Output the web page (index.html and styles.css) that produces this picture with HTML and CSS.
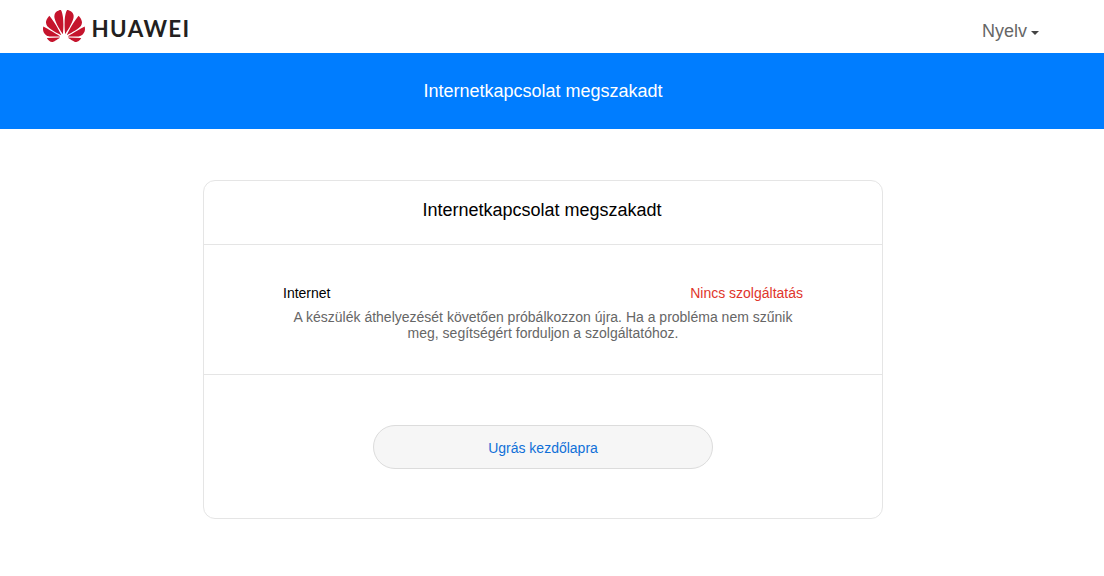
FILE: index.html
```
<!DOCTYPE html>
<html lang="hu">
<head>
  <meta charset="UTF-8">
  <title>Internetkapcsolat megszakadt</title>
  <link rel="stylesheet" href="styles.css">
</head>
<body>
  <header class="header">
    <div class="logo">
      <svg class="logo-mark" viewBox="0 2.96 24 18.08" preserveAspectRatio="none" aria-hidden="true">
        <path d="M3.67 6.14S1.82 7.91 1.72 9.78v.35c.08 1.51 1.22 2.4 1.22 2.4 1.83 1.79 6.26 4.04 7.3 4.55 0 0 .06.03.1-.01l.02-.04v-.04C7.52 10.8 3.67 6.14 3.67 6.14zM9.65 18.6c-.02-.08-.1-.08-.1-.08l-7.38.26c.8 1.43 2.15 2.53 3.56 2.2.96-.25 3.16-1.78 3.88-2.3.06-.05.04-.09.04-.09zm.08-.78C6.49 15.63.21 12.28.21 12.28c-.15.46-.2.9-.21 1.3v.07c0 1.07.4 1.82.4 1.82.8 1.69 2.34 2.2 2.34 2.2.7.3 1.4.31 1.4.31.12.02 4.4 0 5.54 0 .05 0 .08-.05.08-.05v-.06c0-.03-.03-.05-.03-.05zM9.06 3.19a3.42 3.42 0 00-2.57 3.15v.41c.03.6.16 1.05.16 1.05.66 2.9 3.86 7.65 4.55 8.65.05.05.1.03.1.03a.1.1 0 00.06-.1c1.06-10.6-1.11-13.42-1.11-13.42-.32.02-1.19.23-1.19.23zm8.299 2.27s-.49-1.8-2.44-2.28c0 0-.57-.14-1.17-.22 0 0-2.18 2.81-1.12 13.43.01.07.06.08.06.08.07.03.1-.03.1-.03.72-1.03 3.9-5.76 4.55-8.64 0 0 .36-1.4.02-2.34zm-2.92 13.07s-.07 0-.09.05c0 0-.01.07.03.1.7.51 2.85 2 3.88 2.3 0 0 .16.05.43.06h.14c.69-.02 1.9-.37 3-2.26l-7.4-.25zm7.83-8.41c.14-2.06-1.94-3.97-1.94-3.98 0 0-3.85 4.66-6.67 10.8 0 0-.03.08.02.13l.04.01h.06c1.06-.53 5.46-2.77 7.28-4.54 0 0 1.15-.93 1.21-2.42zm1.52 2.14s-6.28 3.37-9.52 5.55c0 0-.05.04-.03.11 0 0 .03.06.07.06 1.16 0 5.56 0 5.67-.02 0 0 .57-.02 1.27-.29 0 0 1.56-.5 2.37-2.27 0 0 .73-1.45.17-3.14z"/>
      </svg>
      <svg class="logo-text" viewBox="0 0 100 32">
        <text x="0.5" y="27" textLength="99" lengthAdjust="spacingAndGlyphs">HUAWEI</text>
      </svg>
    </div>
    <div class="language">Nyelv<span class="caret"></span></div>
  </header>

  <div class="banner">Internetkapcsolat megszakadt</div>

  <main class="content">
    <div class="card">
      <div class="card-title">Internetkapcsolat megszakadt</div>
      <div class="card-body">
        <div class="status">
          <span>Internet</span>
          <span class="status-value">Nincs szolgáltatás</span>
        </div>
        <p class="hint">A készülék áthelyezését követően próbálkozzon újra. Ha a probléma nem szűnik meg, segítségért forduljon a szolgáltatóhoz.</p>
      </div>
      <div class="card-footer">
        <button class="btn">Ugrás kezdőlapra</button>
      </div>
    </div>
  </main>
</body>
</html>
```
FILE: styles.css
```
* {
  box-sizing: border-box;
}

body {
  margin: 0;
  background: #fff;
  color: #000;
  font-family: "Liberation Sans", Arial, sans-serif;
  font-size: 14px;
}

.header {
  display: flex;
  justify-content: space-between;
  height: 53px;
  padding: 10px 65px 0 43px;
}

.logo {
  display: flex;
  align-items: flex-start;
  gap: 6px;
}

.logo-mark {
  width: 42px;
  height: 32px;
  fill: #c5142d;
}

.logo-text {
  width: 100px;
  height: 32px;
  fill: #231f20;
  font-family: Lato, sans-serif;
  font-size: 22px;
  font-weight: 700;
  letter-spacing: 1.3px;
}

.language {
  display: flex;
  align-items: center;
  height: 42px;
  color: #666;
  font-size: 18px;
}

.caret {
  margin: 4px 0 0 4px;
  border-top: 4px solid #444;
  border-left: 4px solid transparent;
  border-right: 4px solid transparent;
}

.banner {
  height: 76px;
  padding-right: 18px;
  background: #007dff;
  color: #fff;
  font-size: 18px;
  line-height: 76px;
  text-align: center;
}

.content {
  padding: 51px 18px 0 0;
}

.card {
  width: 680px;
  height: 339px;
  margin: 0 auto;
  border: 1px solid #e5e5e5;
  border-radius: 12px;
}

.card-title {
  height: 64px;
  padding-right: 2px;
  border-bottom: 1px solid #e5e5e5;
  font-size: 18px;
  line-height: 58px;
  text-align: center;
}

.card-body {
  height: 130px;
  padding: 40px 79px 0;
  border-bottom: 1px solid #e5e5e5;
}

.status {
  display: flex;
  justify-content: space-between;
  line-height: 16px;
}

.status-value {
  color: #e0352b;
}

.hint {
  margin: 8px 0 0;
  color: #666;
  line-height: 16px;
  text-align: center;
}

.card-footer {
  display: flex;
  justify-content: center;
  padding-top: 50px;
}

.btn {
  width: 340px;
  height: 44px;
  padding: 2px 0 0;
  border: 1px solid #dcdcdc;
  border-radius: 22px;
  background: #f6f6f6;
  color: #1070d8;
  font-family: inherit;
  font-size: 14px;
  cursor: pointer;
}
```
